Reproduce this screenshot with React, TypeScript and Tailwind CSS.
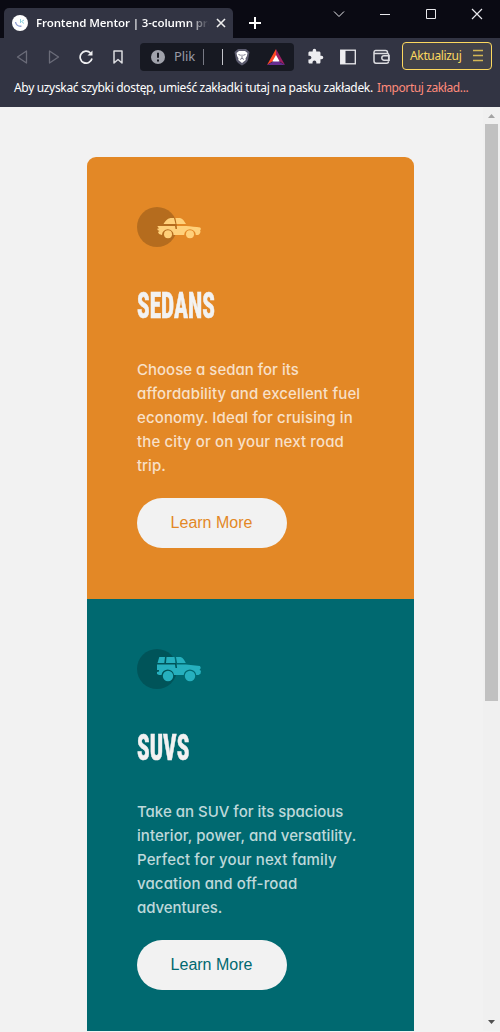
import React from 'react';

function Sedan() {
  return (
    <svg width="64" height="40" viewBox="0 0 64 40" className="block">
      <circle cx="20" cy="20" r="20" fill="#000" opacity=".2" />
      <path fill="#FFD07A" d="M26.500 17c1.600-2.800 3.600-5.500 7-6h3.500l1.500 6zM38.500 11h4.500c2.600.6 4.300 3 6 6h-9.500zM20.300 19H38l.5 3h1.600l-.4-3H49c5 .3 10 1 14.200 1.500l.8 1.500-1 1.500.5.500c0 2-1 3.500-2.500 4h-2.200a5.800 5.800 0 1 0-11.600 0H36.600a5.800 5.800 0 1 0-11.600 0l-3-1-1-2 1.500-1-2-1v-1.500h1.500z" />
      <circle cx="31" cy="27.300" r="4" fill="#FFD07A" />
      <circle cx="53" cy="27.300" r="4" fill="#FFD07A" />
    </svg>
  );
}

function Suv() {
  return (
    <svg width="64" height="40" viewBox="0 0 64 40" className="block">
      <circle cx="20" cy="20" r="20" fill="#000" opacity=".2" />
      <path fill="#26B0BE" d="M20.500 14l1.800-6H28l-.7 6zM29.500 8h8l1 6H29zM39 8h4.500c2.500.6 4 3.200 5.300 6h-8.700zM20 15.500H38l.5 3.500h1.600l-.4-3.500H49l14 1.500.8 2-1.300 2 1.500.8-.5 3-2 1.200h-2.300a6.300 6.300 0 0 0-12.500 0H37a6.300 6.300 0 0 0-12.500 0H22l-2-1v-2l2-.5v-1.500h-2z" />
      <circle cx="31" cy="27" r="5.200" fill="#26B0BE" />
      <circle cx="53" cy="27" r="5.200" fill="#26B0BE" />
    </svg>
  );
}

function TabStrip() {
  return (
    <div className="flex h-[38px] bg-[#0a0a13]">
      <div className="ml-1 mt-2 flex h-[30px] w-[229px] items-center rounded-t-[5px] bg-[#323443] pl-2">
        <svg width="16" height="16" viewBox="0 0 16 16" className="shrink-0">
          <circle cx="8" cy="8" r="8" fill="#fff" />
          <path d="M3.500 7c.5 3 2.500 4.500 6 4.200" stroke="#8d9bd0" strokeWidth="1.300" fill="none" />
          <path d="M8.500 4v4M12 5l-2.500 1.500L12 8.500" stroke="#8fd0dc" strokeWidth="1" fill="none" />
        </svg>
        <div className="ml-2 w-[173px] overflow-hidden bg-gradient-to-r from-white from-88% to-transparent bg-clip-text text-[11.500px] font-semibold tracking-[-0.13px] whitespace-nowrap text-transparent">
          Frontend Mentor | 3-column pre
        </div>
        <svg width="10" height="10" viewBox="0 0 10 10" className="ml-[7px] shrink-0" stroke="#eee" strokeWidth="1.600">
          <path d="M1 1l8 8M9 1L1 9" />
        </svg>
      </div>
      <svg width="12" height="12" viewBox="0 0 12 12" className="mt-[17px] ml-4" stroke="#fff" strokeWidth="2">
        <path d="M6 0v12M0 6h12" />
      </svg>
      <div className="ml-[72px] flex h-7 items-center text-[#e8e8ec]">
        <svg width="12" height="12" viewBox="0 0 12 12" fill="none" stroke="currentColor">
          <path d="M1 3.500l5 5 5-5" />
        </svg>
        <svg width="12" height="12" viewBox="0 0 12 12" className="ml-[34px]" fill="none" stroke="currentColor">
          <path d="M1 6.500h10" />
        </svg>
        <svg width="12" height="12" viewBox="0 0 12 12" className="ml-[34px]" fill="none" stroke="currentColor">
          <path d="M1.500 1.500h9v9h-9z" />
        </svg>
        <svg width="12" height="12" viewBox="0 0 12 12" className="ml-[34px]" fill="none" stroke="currentColor" strokeWidth="1.200">
          <path d="M1 1l10 10M11 1L1 11" />
        </svg>
      </div>
    </div>
  );
}

function BraveLion() {
  return (
    <svg width="16" height="18" viewBox="0 0 16 18" className="ml-[11px] shrink-0">
      <path d="M4 1h8l3.500 3-1.500 8c-.7 2-3 4-6 5.500C5 16 2.700 14 2 12L.5 4z" fill="#5b5b6e" />
      <path d="M5 3h6l2.500 2-.6 3-1.400 2.500.3 1.500L8 15l-3.800-3 .3-1.500L3.100 8l-.6-3z" fill="#fff" />
      <path d="M4.500 6.500l2.300.8M11.500 6.500l-2.300.8M8 6.500v4M6 11.500l2-1.200 2 1.200" stroke="#5b5b6e" strokeWidth=".8" fill="none" />
    </svg>
  );
}

function Toolbar() {
  return (
    <div className="flex h-[37px] items-center bg-[#323443]">
      <svg width="12" height="14" viewBox="0 0 12 14" className="ml-4" fill="none" stroke="#6b6c79" strokeWidth="1.300" strokeLinejoin="round">
        <path d="M10.500 1v12L1.500 7z" />
      </svg>
      <svg width="12" height="14" viewBox="0 0 12 14" className="ml-5" fill="none" stroke="#6b6c79" strokeWidth="1.300" strokeLinejoin="round">
        <path d="M1.500 1v12l9-6z" />
      </svg>
      <svg width="14" height="14" viewBox="0 0 14 14" className="ml-[19px]" fill="none" stroke="#f0f0f2" strokeWidth="1.700">
        <path d="M11.500 3A6 6 0 1 0 13 8.500" />
        <path d="M13.500.5v5h-5z" fill="#f0f0f2" stroke="none" />
      </svg>
      <svg width="10" height="14" viewBox="0 0 10 14" className="ml-[20px]" fill="none" stroke="#dcdce0" strokeWidth="1.500" strokeLinejoin="round">
        <path d="M1 1h8v12L5 9.500 1 13z" />
      </svg>
      <div className="ml-[17px] flex h-7 w-[154px] items-center rounded-[4px] bg-[#171922] pl-[11px]">
        <svg width="14" height="14" viewBox="0 0 14 14" className="shrink-0">
          <circle cx="7" cy="7" r="7" fill="#a0a2ab" />
          <path d="M7 2.800v5M7 9.500v2" stroke="#171922" strokeWidth="2" />
        </svg>
        <span className="ml-[9px] w-[22px] font-['Noto_Sans',sans-serif] text-[13px] tracking-[-0.1px] text-[#999ba5]">Plik</span>
        <span className="ml-[7px] h-4 w-px bg-[#777984]" />
        <span className="ml-[18px] h-4 w-px bg-[#c4c5cb]" />
        <BraveLion />
        <svg width="18" height="16" viewBox="0 0 18 16" className="ml-[17px] shrink-0">
          <path d="M9 0L0 16l9-6z" fill="#ff4724" />
          <path d="M9 0l9 16-9-6z" fill="#9e1f63" />
          <path d="M0 16h18l-9-5z" fill="#662d91" />
          <path d="M9 6l3.700 6.500H5.300z" fill="#fff" />
        </svg>
      </div>
      <svg width="17" height="17" viewBox="0 0 24 24" className="ml-[13px]" fill="#ededf0">
        <path d="M20.500 11H19V7c0-1.100-.9-2-2-2h-4V3.500a2.500 2.500 0 0 0-5 0V5H4c-1.100 0-1.990.9-1.990 2v3.800H3.500c1.490 0 2.700 1.210 2.700 2.700s-1.210 2.700-2.700 2.700H2V20c0 1.100.9 2 2 2h3.800v-1.500c0-1.490 1.210-2.700 2.700-2.700 1.490 0 2.700 1.210 2.700 2.700V22H17c1.100 0 2-.9 2-2v-4h1.500a2.500 2.500 0 0 0 0-5z" />
      </svg>
      <svg width="16" height="16" viewBox="0 0 16 16" className="ml-[16px]">
        <rect x=".7" y="1.200" width="14.600" height="13.600" fill="none" stroke="#ededf0" strokeWidth="1.300" />
        <path d="M.7 1h4.800v14H.7z" fill="#ededf0" />
      </svg>
      <svg width="17" height="16" viewBox="0 0 17 16" className="ml-[17px]" fill="none" stroke="#dcdce0" strokeWidth="1.500">
        <path d="M14.500 5V3.500c0-1-.8-2-2-2H2.500c-1 0-1.500.8-1.500 1.800v8.700c0 1.300.8 2.200 2 2.200h10.500c1 0 2-.8 2-2M1 4.500h13.500c.8 0 1.200.4 1.200 1.200V12" />
        <path d="M16 6.800h-5a2.200 2.200 0 0 0 0 4.400h5z" />
      </svg>
      <div className="ml-3 flex h-7 w-[90px] -translate-y-px items-center rounded-[4px] border border-[#fcd85f] bg-[#424249] pl-[7px] font-['Noto_Sans',sans-serif] text-[12px] text-[#fcd85f]">
        <span className="w-[53px] tracking-[-0.35px]">Aktualizuj</span>
        <svg width="10" height="13" viewBox="0 0 10 13" className="ml-[10px]" stroke="#d3b655" strokeWidth="1.700">
          <path d="M0 1.500h10M0 6.500h10M0 11.500h10" />
        </svg>
      </div>
    </div>
  );
}

function BookmarksBar() {
  return (
    <div className="flex h-8 bg-[#323443] pt-[4px] pl-[14px] font-['Noto_Sans',sans-serif] text-[12px] leading-[18px] whitespace-nowrap">
      <span className="w-[363px] tracking-[-0.33px] text-white">Aby uzyskać szybki dostęp, umieść zakładki tutaj na pasku zakładek.</span>
      <span className="tracking-[-0.4px] text-[#ff8b7b]">Importuj zakład...</span>
    </div>
  );
}

interface Line {
  text: string;
  tracking: string;
}

function Card({ icon, title, lines, className, buttonClass }: {
  icon: React.ReactNode;
  title: string;
  lines: Line[];
  className: string;
  buttonClass: string;
}) {
  return (
    <section className={`h-[442px] shrink-0 px-[50px] pt-[50px] ${className}`}>
      {icon}
      <h1 className="mt-[35px] h-12 w-max origin-left scale-x-[0.63] font-['Roboto_Condensed',sans-serif] text-[37px] leading-[48px] font-extrabold text-[#f2f2f2] [-webkit-text-stroke:0.6px_#f2f2f2]">
        {title}
      </h1>
      <p className="mt-[28px] text-[15px] leading-6 font-medium whitespace-nowrap text-white/75 [font-feature-settings:'cv11']">
        {lines.map((line) => (
          <span key={line.text} className={`block ${line.tracking}`}>{line.text}</span>
        ))}
      </p>
      <button className={`mt-5 block h-[50px] w-[150px] rounded-full bg-[#f2f2f2] pr-px font-['Liberation_Sans',sans-serif] text-[16px] ${buttonClass}`}>
        Learn More
      </button>
    </section>
  );
}

const sedanLines: Line[] = [
  { text: 'Choose a sedan for its', tracking: 'tracking-[0px]' },
  { text: 'affordability and excellent fuel', tracking: 'tracking-[0.14px]' },
  { text: 'economy. Ideal for cruising in', tracking: 'tracking-[0.14px]' },
  { text: 'the city or on your next road', tracking: 'tracking-[0.14px]' },
  { text: 'trip.', tracking: 'tracking-[0px]' },
];

const suvLines: Line[] = [
  { text: 'Take an SUV for its spacious', tracking: 'tracking-[-0.01px]' },
  { text: 'interior, power, and versatility.', tracking: 'tracking-[0.06px]' },
  { text: 'Perfect for your next family', tracking: 'tracking-[0.13px]' },
  { text: 'vacation and off-road', tracking: 'tracking-[0.13px]' },
  { text: 'adventures.', tracking: 'tracking-[-0.07px]' },
];

export default function App() {
  return (
    <div className="flex h-[1032px] w-[500px] flex-col overflow-hidden bg-[#f2f2f2] font-['Inter',sans-serif]">
      <header className="font-['Noto_Sans',sans-serif]">
        <TabStrip />
        <Toolbar />
        <BookmarksBar />
      </header>
      <div className="flex h-[924px]">
        <main className="flex w-[483px] flex-col overflow-hidden pt-[50px] pl-[87px]">
          <div className="w-[327px] shrink-0 overflow-hidden rounded-t-[9px]">
            <Card
              icon={<Sedan />}
              title="SEDANS"
              lines={sedanLines}
              className="bg-[#e38826]"
              buttonClass="text-[#e38826]"
            />
            <Card
              icon={<Suv />}
              title="SUVS"
              lines={suvLines}
              className="bg-[#006970]"
              buttonClass="text-[#006970]"
            />
          </div>
        </main>
        <div className="flex w-[17px] flex-col items-center bg-[#f0f0f0]">
          <svg width="7" height="4" viewBox="0 0 7 4" className="mt-[7px]" fill="#a3a3a3"><path d="M0 4l3.500-4L7 4z" /></svg>
          <div className="mt-[6px] h-[577px] w-[13px] bg-[#c1c1c1]" />
          <svg width="7" height="4" viewBox="0 0 7 4" className="mt-auto mb-[7px]" fill="#505050"><path d="M0 0l3.500 4L7 0z" /></svg>
        </div>
      </div>
    </div>
  );
}
